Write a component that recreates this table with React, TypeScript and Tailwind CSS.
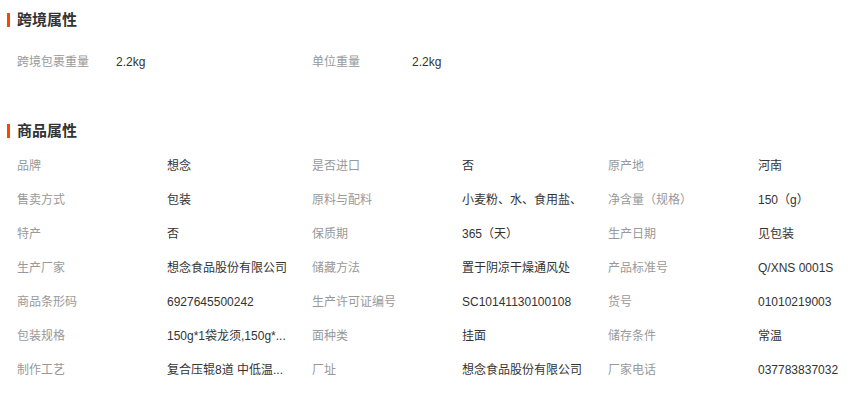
import React from "react";

const rows: [string, string, string, string, string, string][] = [
  ["品牌", "想念", "是否进口", "否", "原产地", "河南"],
  ["售卖方式", "包装", "原料与配料", "小麦粉、水、食用盐、", "净含量（规格）", "150（g）"],
  ["特产", "否", "保质期", "365（天）", "生产日期", "见包装"],
  ["生产厂家", "想念食品股份有限公司", "储藏方法", "置于阴凉干燥通风处", "产品标准号", "Q/XNS 0001S"],
  ["商品条形码", "6927645500242", "生产许可证编号", "SC10141130100108", "货号", "01010219003"],
  ["包装规格", "150g*1袋龙须,150g*...", "面种类", "挂面", "储存条件", "常温"],
  ["制作工艺", "复合压辊8道 中低温...", "厂址", "想念食品股份有限公司", "厂家电话", "037783837032"],
];

function Heading({ title }: { title: string }) {
  return (
    <div className="flex items-center h-[20px] pl-[7px]">
      <div className="w-[3px] h-[14px] bg-[#ff4400]" />
      <div className="ml-[7px] text-[15px] font-bold text-[#333] leading-[20px]">{title}</div>
    </div>
  );
}

export default function App() {
  return (
    <div
      className="w-[865px] h-[393px] bg-white overflow-hidden text-[12px]"
      style={{ fontFamily: '"Liberation Sans", "Noto Sans CJK SC", sans-serif' }}
    >
      <div className="pt-[10px]">
        <Heading title="跨境属性" />
      </div>
      <div className="flex pl-[17px] mt-[22px] h-[20px] items-center">
        <div className="w-[295px] flex shrink-0">
          <div className="w-[99px] text-[#999]">跨境包裹重量</div>
          <div className="text-[#333]">2.2kg</div>
        </div>
        <div className="w-[296px] flex shrink-0">
          <div className="w-[100px] text-[#999]">单位重量</div>
          <div className="text-[#333]">2.2kg</div>
        </div>
      </div>
      <div className="mt-[49px]">
        <Heading title="商品属性" />
      </div>
      <div className="pl-[17px] mt-[8px] flex flex-col">
        {rows.map((r, i) => (
          <div key={i} className="flex h-[34px] items-center">
            {[0, 1, 2].map((c) => (
              <div
                key={c}
                className={`flex shrink-0 ${c === 2 ? "w-[257px]" : c === 0 ? "w-[295px]" : "w-[296px]"}`}
              >
                <div className="w-[150px] shrink-0 text-[#999] whitespace-nowrap">{r[c * 2]}</div>
                <div className="text-[#333] whitespace-nowrap">{r[c * 2 + 1]}</div>
              </div>
            ))}
          </div>
        ))}
      </div>
    </div>
  );
}
